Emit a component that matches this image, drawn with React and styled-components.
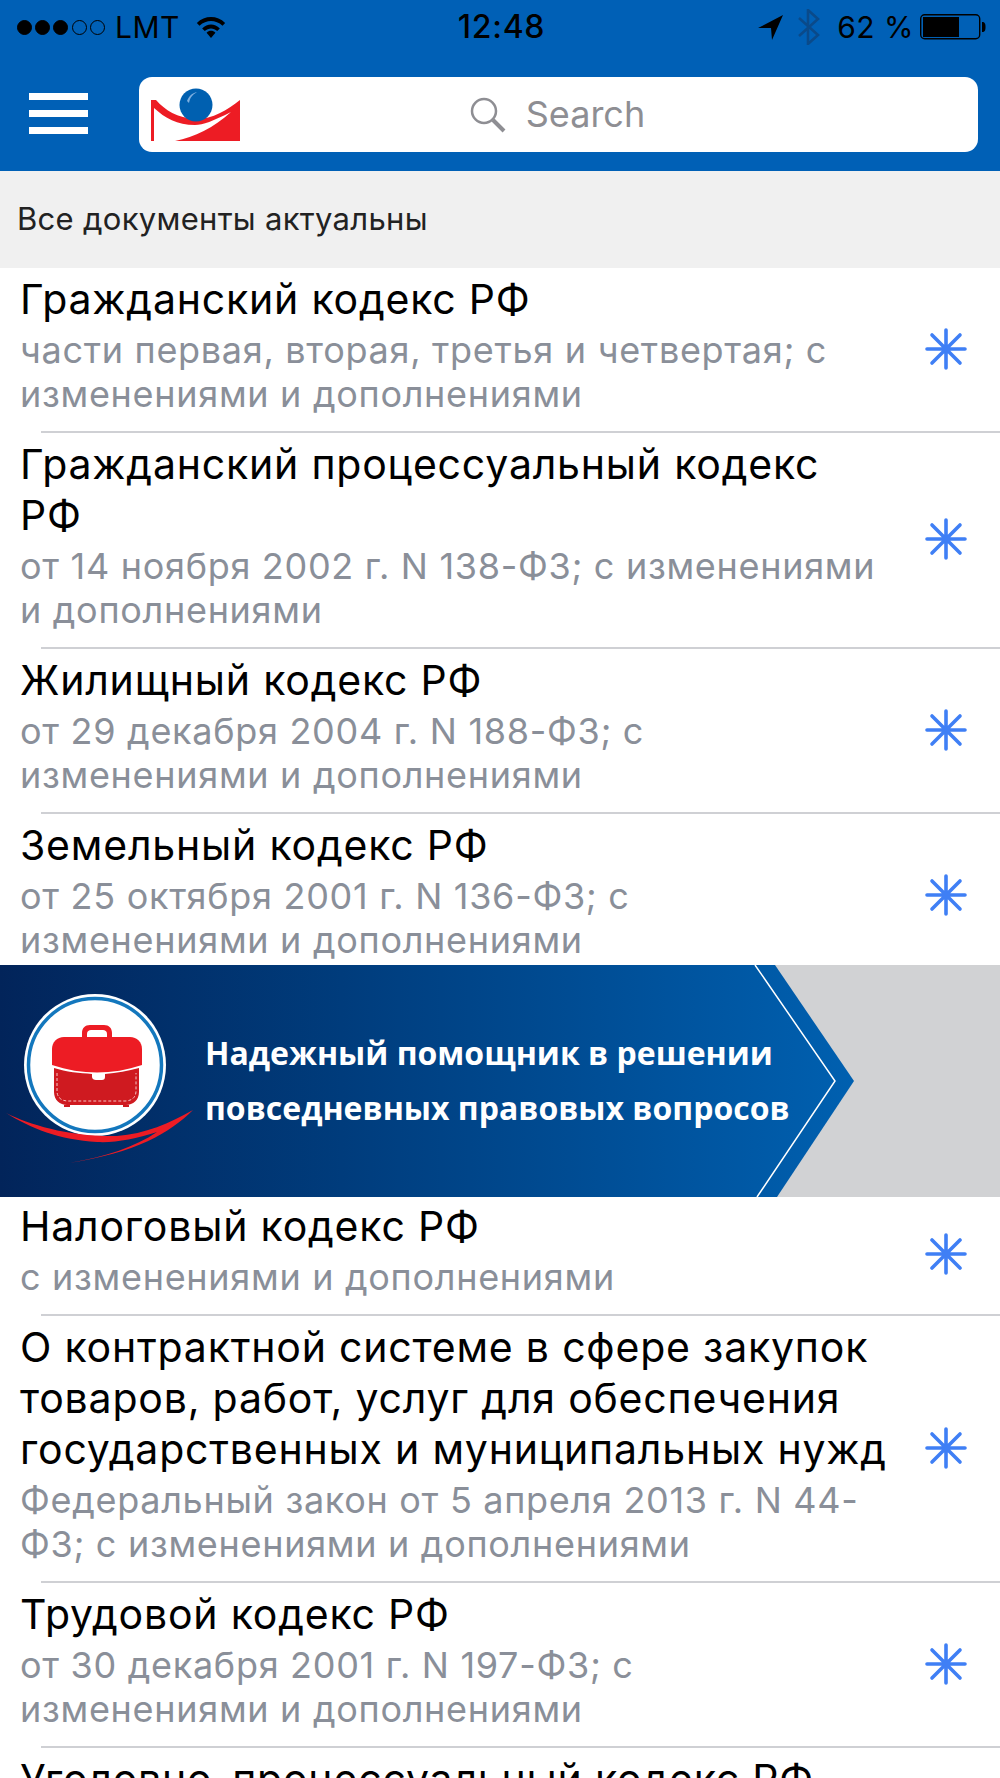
import React from 'react';
import styled, { createGlobalStyle } from 'styled-components';

const Global = createGlobalStyle`
  html, body { margin: 0; padding: 0; background: #fff; }
  * { box-sizing: border-box; }
`;
const Page = styled.div`
  width: 1000px; height: 1778px; overflow: hidden; background: #fff;
  font-family: Inter, "Liberation Sans", sans-serif; color: #000;
`;
const Header = styled.header`
  height: 171px; background: #0060b6; display: flex; flex-direction: column;
`;
const StatusBar = styled.div`
  height: 77px; padding: 7px 14px 0 17px; display: grid; grid-template-columns: 1fr auto 1fr;
  align-items: start; font-size: 30px; line-height: 40px;
`;
const StatusLeft = styled.div`display: flex; align-items: center; height: 40px;`;
const StatusRight = styled.div`display: flex; align-items: center; justify-content: flex-end; height: 40px;`;
const Dot = styled.span`
  width: 15px; height: 15px; border-radius: 50%; margin-right: 3.2px;
  border: 1.3px solid #000; background: ${p => (p.$on ? '#000' : 'transparent')};
`;
const Carrier = styled.span`margin: 0 15px 0 7px; letter-spacing: .5px;`;
const Time = styled.span`font-size: 32px; font-weight: 500; letter-spacing: .7px;`;
const Percent = styled.span`margin: 0 6px 0 17px; letter-spacing: .5px;`;
const Toolbar = styled.div`
  flex: 1; display: flex; align-items: flex-start; padding-left: 29px; padding-right: 22px;
`;
const Burger = styled.div`
  width: 59px; margin-top: 16px; margin-right: 51px; display: flex; flex-direction: column; gap: 10px;
`;
const BurgerBar = styled.span`height: 7px; background: #fff;`;
const SearchBox = styled.div`
  position: relative; flex: 1; height: 75px; background: #fff; border-radius: 13px;
  display: flex; align-items: center; justify-content: center; gap: 20px; padding-right: 2px;
`;
const LogoSlot = styled.div`position: absolute; left: 12px; top: 11px; line-height: 0;`;
const SearchText = styled.span`font-size: 36px; color: #8e8e93; margin-top: -2px;`;
const Notice = styled.div`
  height: 97px; background: #f0f0f0; padding: 23px 0 0 17px; font-size: 31px; line-height: 50px;
  letter-spacing: .3px; color: #222;
`;
const Row = styled.div`
  display: flex; align-items: center; padding-left: 20px;
`;
const RowText = styled.div`width: 868px; flex: none; padding: 6px 0 15px;`;
const Title = styled.div`font-size: 41px; line-height: 51px; letter-spacing: .8px; color: #000;`;
const Sub = styled.div`margin-top: 3px; font-size: 36px; line-height: 44px; letter-spacing: .7px; color: #8a8f99;`;
const StarSlot = styled.div`margin: -2px 0 0 37px; line-height: 0;`;
const Divider = styled.div`height: 2px; margin-left: 41px; background: #cfd0d4;`;
const Promo = styled.div`
  position: relative; height: 232px; margin: -12px 0 -2px; line-height: 0; background: #d1d2d4;
`;
const PromoText = styled.div`
  position: absolute; left: 205px; top: 60px; font-family: "Open Sans", sans-serif; font-weight: 700;
  font-size: 32px; line-height: 55px; color: #fff; white-space: nowrap;
`;

const Star = () => (
  <svg width="42" height="42" viewBox="-21 -21 42 42" stroke="#3f7ff5" strokeWidth="3.6" strokeLinecap="round">
    <path d="M0-19V19M-19 0H19M-14-14L14 14M-14 14L14-14" />
  </svg>
);
const Wifi = () => (
  <svg width="32" height="23" viewBox="0 0 34 26">
    <path d="M1 8C10-1 24-1 33 8L30 11C22 4 12 4 4 11Z" />
    <path d="M7 14C13 8 21 8 27 14L24 17C20 13 14 13 10 17Z" />
    <path d="M12 19C15 16 19 16 22 19L17 25Z" />
  </svg>
);
const Arrow = () => (
  <svg width="26" height="26" viewBox="0 0 26 26" style={{ marginRight: 14, marginTop: 2 }}><path d="M0 13L25 0L14 25L13 13Z" /></svg>
);
const Bluetooth = () => (
  <svg width="22" height="36" viewBox="0 0 22 36" fill="none" stroke="#0a4a8a" strokeWidth="2.6">
    <path d="M1 9L20 26L10 35V1L20 10L1 27" />
  </svg>
);
const Battery = () => (
  <svg width="66" height="26" viewBox="0 0 66 26">
    <rect x=".7" y=".7" width="59" height="24" rx="4" fill="none" stroke="#000" strokeWidth="1.4" />
    <rect x="3" y="3" width="36" height="20" fill="#000" />
    <path d="M62 8C65 8 65.500 10 65.500 13S65 18 62 18Z" fill="#000" />
  </svg>
);
const Logo = () => (
  <svg width="92" height="56" viewBox="0 0 92 56">
    <path d="M0 12H5C14 22 26 30 45 31C62 31 76 22 89 12V53H24C44 49 62 40 80 24C62 33 52 37 44 37C26 37 14 30 3 20V53H0Z" fill="#ed1c24" />
    <circle cx="45" cy="17" r="16.500" fill="#0060b0" />
    <path d="M36 13C38 8 41 5 46 4C41 7 39 10 38 15Z" fill="#7fb0e0" />
  </svg>
);
const SearchIcon = () => (
  <svg width="36" height="36" viewBox="0 0 36 36" fill="none" stroke="#8e8e93" strokeWidth="2.500">
    <circle cx="14" cy="14" r="12" />
    <path d="M23 23L34 34" strokeWidth="4" />
  </svg>
);
const PromoArt = () => (
  <svg width="1000" height="232" viewBox="0 0 1000 232">
    <defs>
      <linearGradient id="pg" x1="0" x2="1" y1="0" y2="0">
        <stop offset="0" stopColor="#02245a" />
        <stop offset=".4" stopColor="#003c7c" />
        <stop offset="1" stopColor="#0060b0" />
      </linearGradient>
    </defs>
    <path d="M0 0H775L854 116L777 232H0Z" fill="url(#pg)" />
    <path d="M755 0L835 116L757 232" fill="none" stroke="#fff" strokeWidth="1.500" />
    <circle cx="95" cy="100" r="71" fill="#fff" />
    <circle cx="95" cy="100" r="66.500" fill="none" stroke="#1377bd" strokeWidth="3.500" />
    <path d="M82 72V68C82 63 85 60 90 60H104C109 60 112 63 112 68V72H107V69C107 66 105 65 103 65H91C89 65 87 66 87 69V72Z" fill="#ed1c24" />
    <path d="M64 72H130C137 72 142 77 142 84V100C112 110 82 110 52 100V84C52 77 57 72 64 72Z" fill="#ed1c24" />
    <path d="M54 103C66 107 80 108 92 109V112C92 114 94 115 96 115H102C104 115 105 114 105 112V109C117 108 128 106 139 103V127C139 135 133 140 126 140H67C60 140 54 135 54 127Z" fill="#cf1a20" />
    <path d="M64 142H70V140H64ZM123 142H129V140H123Z" fill="#cf1a20" />
    <path d="M57 108V126C57 132 61 136 68 136H125C132 136 136 132 136 126V108" fill="none" stroke="#f3c5c5" strokeWidth="1" strokeDasharray="3 2" />
    <path d="M6 148C30 160 70 172 117 171C145 169 170 158 193 145C170 168 135 188 69 198C105 192 135 182 157 167C135 174 115 178 97 177C60 175 30 163 6 148Z" fill="#ed1c24" />
  </svg>
);

const docs = [
  ['Гражданский кодекс РФ', 'части первая, вторая, третья и четвертая; с изменениями и дополнениями'],
  ['Гражданский процессуальный кодекс РФ', 'от 14 ноября 2002 г. N 138-ФЗ; с изменениями и дополнениями'],
  ['Жилищный кодекс РФ', 'от 29 декабря 2004 г. N 188-ФЗ; с изменениями и дополнениями'],
  ['Земельный кодекс РФ', 'от 25 октября 2001 г. N 136-ФЗ; с изменениями и дополнениями'],
];
const docs2 = [
  ['Налоговый кодекс РФ', 'с изменениями и дополнениями'],
  ['О контрактной системе в сфере закупок товаров, работ, услуг для обеспечения государственных и муниципальных нужд', 'Федеральный закон от 5 апреля 2013 г. N 44-ФЗ; с изменениями и дополнениями'],
  ['Трудовой кодекс РФ', 'от 30 декабря 2001 г. N 197-ФЗ; с изменениями и дополнениями'],
  ['Уголовно-процессуальный кодекс РФ', ''],
];
const DocRow = ({ d, last }) => (
  <>
    <Row>
      <RowText>
        <Title>{d[0]}</Title>
        {d[1] && <Sub>{d[1]}</Sub>}
      </RowText>
      {d[1] && <StarSlot><Star /></StarSlot>}
    </Row>
    {!last && <Divider />}
  </>
);

export default function App() {
  return (
    <Page>
      <Global />
      <Header>
        <StatusBar>
          <StatusLeft>
            <Dot $on /><Dot $on /><Dot $on /><Dot /><Dot />
            <Carrier>LMT</Carrier>
            <Wifi />
          </StatusLeft>
          <Time>12:48</Time>
          <StatusRight>
            <Arrow />
            <Bluetooth />
            <Percent>62 %</Percent>
            <Battery />
          </StatusRight>
        </StatusBar>
        <Toolbar>
          <Burger><BurgerBar /><BurgerBar /><BurgerBar /></Burger>
          <SearchBox>
            <LogoSlot><Logo /></LogoSlot>
            <SearchIcon />
            <SearchText>Search</SearchText>
          </SearchBox>
        </Toolbar>
      </Header>
      <Notice>Все документы актуальны</Notice>
      {docs.map((d, i) => <DocRow key={i} d={d} last={i === docs.length - 1} />)}
      <Promo>
        <PromoArt />
        <PromoText>Надежный помощник в решении<br />повседневных правовых вопросов</PromoText>
      </Promo>
      {docs2.map((d, i) => <DocRow key={i} d={d} />)}
    </Page>
  );
}
